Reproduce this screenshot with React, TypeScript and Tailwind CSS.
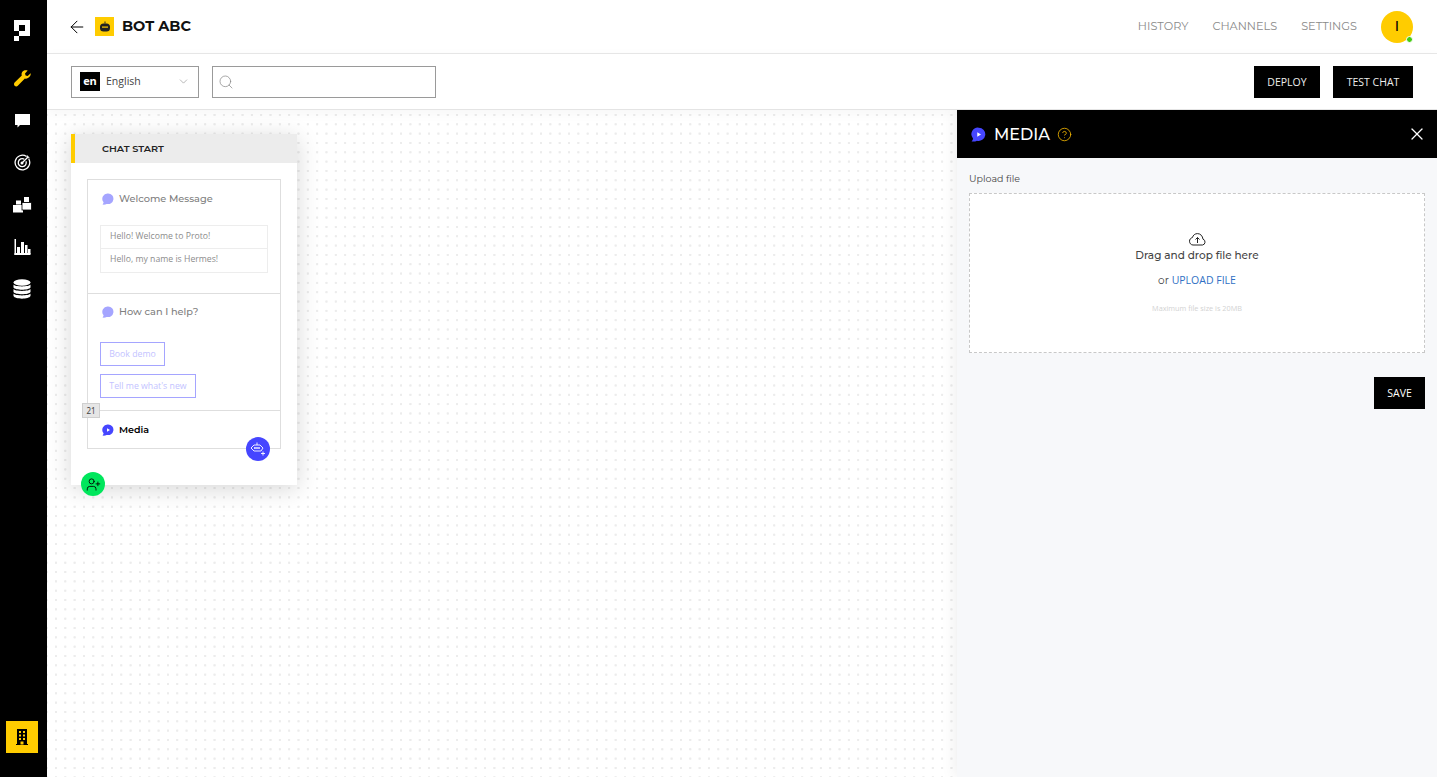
import { ArrowLeft, ChevronDown, HelpCircle, Search, UserPlus, X } from "lucide-react";

const mont = "font-['Montserrat','Inter','Liberation_Sans',sans-serif]";
const open = "font-['Open_Sans',sans-serif]";

function Logo() {
  return (
    <svg width="16" height="21" viewBox="0 0 16 21" fill="white">
      <path d="M0 0h16v16H5v-5H0z" />
      <rect x="5" y="5" width="6" height="6" fill="black" />
      <rect x="0" y="16" width="5" height="5" />
    </svg>
  );
}

function Wrench() {
  return (
    <svg width="17" height="17" viewBox="0 0 17 17" fill="#ffcc00">
      <path d="M16.6 3.2l-2.9 2.7-2.1-.5-.6-2L13.700.6C11.600-.3 9.300.2 8.200 2c-.7 1.100-.8 2.300-.4 3.400L.6 12.600c-.8.8-.8 2.200 0 3.200 1 .9 2.400.9 3.200 0l7.100-7.300c1.300.4 2.700.1 3.800-.9 1.400-1.200 2.300-3 1.900-4.400z" />
    </svg>
  );
}

function ChatIcon() {
  return (
    <svg width="15" height="14" viewBox="0 0 15 14" fill="white">
      <path d="M0 0h15v11H5l-2.500 2.500V11H0z" />
    </svg>
  );
}

function TargetIcon() {
  return (
    <svg width="17" height="17" viewBox="0 0 17 17" fill="none" stroke="white">
      <path d="M12.500 2.500A7.300 7.300 0 1 0 14.800 5" strokeWidth="1.300" />
      <path d="M10.300 5.200A4 4 0 1 0 12 7.200" strokeWidth="1.300" />
      <circle cx="8" cy="9" r="1.500" fill="white" stroke="none" />
      <path d="M8 9l6.500-6.500" strokeWidth="1.200" />
      <path d="M13 1.500l.5 2 2 .5" strokeWidth="1.200" />
    </svg>
  );
}

function BlocksIcon() {
  return (
    <svg width="19" height="16" viewBox="0 0 19 16" fill="white">
      <rect x="3" y="3.500" width="5" height="4" />
      <rect x="11" y="0" width="5" height="5" />
      <rect x="0" y="8" width="10" height="7.500" />
      <rect x="9" y="5.500" width="9.500" height="7.500" stroke="black" strokeWidth="0.800" />
    </svg>
  );
}

function BarsIcon() {
  return (
    <svg width="17" height="16" viewBox="0 0 17 16" fill="white">
      <rect x="0.500" y="0" width="1.500" height="16" />
      <rect x="0.500" y="14" width="16" height="2" />
      <rect x="3" y="8" width="3" height="7" />
      <rect x="7" y="3" width="3" height="12" />
      <rect x="11" y="6" width="2.500" height="9" />
      <rect x="14" y="10" width="2.500" height="5" />
    </svg>
  );
}

function DbIcon() {
  return (
    <svg width="18" height="20" viewBox="0 0 18 20" fill="white">
      <ellipse cx="9" cy="3.500" rx="8.500" ry="3.200" />
      <path d="M.500 5.500C2 8 16 8 17.500 5.500v3C16 11.500 2 11.500.500 8.500z" />
      <path d="M.500 10C2 12.500 16 12.500 17.500 10v3C16 16 2 16 .500 13z" />
      <path d="M.500 14.500C2 17 16 17 17.500 14.500v2.500C16 20.500 2 20.500.500 17z" />
    </svg>
  );
}

function Building() {
  return (
    <svg width="12" height="16" viewBox="0 0 12 16" fill="black">
      <path d="M1 0h10v15h1v1H0v-1h1z" />
      <g fill="#ffcc00">
        <rect x="3" y="2" width="2" height="2" />
        <rect x="7" y="2" width="2" height="2" />
        <rect x="3" y="5.500" width="2" height="2" />
        <rect x="7" y="5.500" width="2" height="2" />
        <rect x="3" y="9" width="2" height="2" />
        <rect x="7" y="9" width="2" height="2" />
        <rect x="4.500" y="12.500" width="3" height="3" />
      </g>
    </svg>
  );
}

function Bubble({ color, play, size = 12 }: { color: string; play?: boolean; size?: number }) {
  return (
    <svg width={size} height={size} viewBox="0 0 12 12">
      <path d="M6.200 0.500a5.300 5.300 0 1 1-1.500 10.400C3.500 11.600 1.500 11.800.500 11.500c.5-.5 1-1.300 1.100-2.300A5.300 5.300 0 0 1 6.200.500z" fill={color} />
      {play && <path d="M5 4.200l3 1.800-3 1.800z" fill="white" />}
    </svg>
  );
}

function BotGlyph() {
  return (
    <svg width="12" height="12" viewBox="0 0 12 12" fill="#222">
      <rect x="5.500" y="0.500" width="1" height="2" />
      <rect x="1" y="2.500" width="10" height="8" rx="3.500" />
      <rect x="3" y="5.500" width="6" height="1.200" fill="#ffcc00" />
    </svg>
  );
}

function RobotPlus() {
  return (
    <svg width="16" height="14" viewBox="0 0 16 14" fill="none" stroke="white" strokeWidth="0.900">
      <path d="M7 .5v2.500" />
      <path d="M4 3h6l3 3-2 3H4L1 6z" />
      <path d="M4 6h6" strokeWidth="1.300" />
      <path d="M13 9.500v4M11 11.500h4" />
    </svg>
  );
}

function CloudArrow() {
  return (
    <svg width="17" height="13" viewBox="0 0 17 13" fill="none" stroke="#222" strokeWidth="1">
      <path d="M4 12h9.500a3 3 0 0 0 .5-5.800C13.600 3 11.500.6 8.500.6 6 .6 4 2.200 3.400 4.600 1.600 5 .5 6.500.5 8.200.5 10.300 2 12 4 12z" />
      <path d="M8.500 10V4.500M6.500 6.500l2-2 2 2" />
    </svg>
  );
}

const sidebarIcons = [
  <Wrench key="wrench" />,
  <ChatIcon key="chat" />,
  <TargetIcon key="target" />,
  <BlocksIcon key="blocks" />,
  <BarsIcon key="bars" />,
  <DbIcon key="db" />,
];

function Sidebar() {
  return (
    <aside className="flex h-[777px] w-[47px] shrink-0 flex-col items-center justify-between bg-black pt-[20px] pr-[3px] pb-[24px]">
      <div className="flex flex-col items-center">
        <div className="mb-[27px] flex h-[21px] items-center">
          <Logo />
        </div>
        <div className="flex flex-col items-center gap-[21px]">
          {sidebarIcons.map((icon, i) => (
            <div key={i} className="flex h-[21px] w-[22px] items-center justify-center">
              {icon}
            </div>
          ))}
        </div>
      </div>
      <div className="flex h-[32px] w-[32px] items-center justify-center bg-[#ffcc00]">
        <Building />
      </div>
    </aside>
  );
}

function TopBar() {
  return (
    <header className="flex h-[54px] items-center border-b border-[#e8e8e8] bg-white pr-[24px] pl-[20px]">
      <ArrowLeft size={20} strokeWidth={1.2} className="text-black" />
      <div className="ml-[8px] flex h-[19px] w-[19px] items-center justify-center bg-[#ffcc00]">
        <BotGlyph />
      </div>
      <span className={`ml-[8px] text-[14.500px] font-bold text-[#111] ${mont}`}>BOT ABC</span>
      <nav className={`ml-auto flex items-center gap-[24px] text-[11.300px] text-[#8a8a8a] ${mont}`}>
        <span>HISTORY</span>
        <span>CHANNELS</span>
        <span>SETTINGS</span>
      </nav>
      <div className="relative ml-[24px] flex h-[32px] w-[32px] items-center justify-center rounded-full bg-[#ffcc00]">
        <span className={`text-[14px] font-medium text-black ${mont}`}>I</span>
        <span className="absolute right-0 bottom-0 h-[7px] w-[7px] rounded-full border border-white bg-[#44cc11]" />
      </div>
    </header>
  );
}

function Toolbar() {
  return (
    <div className="relative z-10 flex h-[56px] items-center border-b border-[#e4e4e4] bg-white pr-[24px] pl-[24px] shadow-[0_3px_12px_rgba(0,0,0,0.04)]">
      <div className="flex h-[32px] w-[128px] items-center border border-[#9a9a9a] pr-[9px] pl-[8px]">
        <span className={`flex h-[19px] w-[20px] items-center justify-center bg-black text-[11px] font-bold text-white ${open}`}>en</span>
        <span className={`ml-[6px] text-[10.500px] text-[#444] ${open}`}>English</span>
        <ChevronDown size={13} strokeWidth={1.1} className="ml-auto translate-x-[1px] text-[#888]" />
      </div>
      <div className="ml-[13px] flex h-[32px] w-[224px] items-center border border-[#9a9a9a] pl-[5px]">
        <Search size={16} strokeWidth={1.1} className="text-[#888]" />
      </div>
      <button className={`ml-auto h-[32px] w-[66px] bg-black pt-[2px] text-[10.500px] font-medium text-[#eee] ${open}`}>DEPLOY</button>
      <button className={`ml-[13px] h-[32px] w-[80px] bg-black pt-[2px] text-[10.500px] font-medium text-[#eee] ${open}`}>TEST CHAT</button>
    </div>
  );
}

function FlowCard() {
  return (
    <div className="relative w-[226px] bg-white pb-[36px] shadow-[0_4px_22px_rgba(0,0,0,0.16)]">
      <div className={`flex h-[29px] items-center border-l-4 border-[#ffcc00] bg-[#ececec] pt-px pl-[27px] text-[9.700px] font-semibold text-[#222] ${mont}`}>
        CHAT START
      </div>
      <div className="relative mx-[16px] mt-[16px] border border-[#dedede]">
        <section className="h-[114px] border-b border-[#dedede] pt-[12px] pr-[12px] pl-[12px]">
          <div className="flex items-center pl-[2px]">
            <Bubble color="#a5a5ff" />
            <span className={`ml-[5px] text-[9.800px] font-medium text-[#808080] ${mont}`}>Welcome Message</span>
          </div>
          <div className={`mt-[18px] border border-[#ededed] text-[8.700px] text-[#8c8c8c] ${open}`}>
            <div className="flex h-[23px] items-center border-b border-[#ededed] pb-px pl-[9px]">Hello! Welcome to Proto!</div>
            <div className="flex h-[23px] items-center pb-px pl-[9px]">Hello, my name is Hermes!</div>
          </div>
        </section>
        <section className="h-[117px] border-b border-[#dedede] pt-[11px] pl-[12px]">
          <div className="flex items-center pl-[2px]">
            <Bubble color="#a5a5ff" />
            <span className={`ml-[5px] text-[9.800px] font-medium text-[#808080] ${mont}`}>How can I help?</span>
          </div>
          <div className={`mt-[22px] flex h-[24px] w-[65px] items-center justify-center border border-[#a5a5ff] pt-[2px] text-[8.750px] text-[#c3c3ff] ${open}`}>
            Book demo
          </div>
          <div className={`mt-[8px] flex h-[24px] w-[96px] items-center justify-center border border-[#a5a5ff] pt-[2px] text-[8.750px] text-[#c3c3ff] ${open}`}>
            Tell me what's new
          </div>
        </section>
        <section className="flex h-[37px] items-center pt-px pl-[14px]">
          <Bubble color="#4646ff" play />
          <span className={`ml-[5px] text-[9.500px] font-semibold text-black ${mont}`}>Media</span>
        </section>
        <span className="absolute top-[223px] left-[-6px] flex h-[15px] w-[18px] items-center justify-center border border-[#cfcfcf] bg-[#e6e6e6] text-[8px] text-[#444]">21</span>
        <span className="absolute right-[10px] bottom-[-13px] flex h-[24px] w-[24px] items-center justify-center rounded-full bg-[#4646ff]">
          <RobotPlus />
        </span>
      </div>
      <span className="absolute bottom-[-11px] left-[10px] flex h-[24px] w-[24px] items-center justify-center rounded-full bg-[#00e65c]">
        <UserPlus size={15} strokeWidth={1.4} className="text-black" />
      </span>
    </div>
  );
}

function MediaPanel() {
  return (
    <aside className="flex w-[480px] shrink-0 flex-col bg-[#f7f8fa] shadow-[0_0_16px_rgba(0,0,0,0.09)]">
      <div className="flex h-[48px] items-center bg-black pr-[10px] pl-[14px]">
        <Bubble color="#4646ff" play size={15} />
        <span className={`ml-[8px] pt-px text-[16px] font-medium text-white ${mont}`}>MEDIA</span>
        <HelpCircle size={15} strokeWidth={1.3} className="ml-[7px] text-[#f5b800]" />
        <X size={20} strokeWidth={1.5} className="ml-auto text-white" />
      </div>
      <div className="flex flex-col px-[12px] pt-[14px]">
        <label className={`text-[9.500px] text-[#444] ${mont}`}>Upload file</label>
        <div className="mt-[7px] flex h-[160px] flex-col items-center border border-dashed border-[#c8c8c8] bg-white pt-[39px]">
          <CloudArrow />
          <span className={`mt-[2px] text-[10.500px] font-medium text-[#444] ${mont}`}>Drag and drop file here</span>
          <span className={`mt-[9px] text-[10.500px] text-[#444] ${mont}`}>
            or <span className={`text-[#2f6fc4] ${open}`}>UPLOAD FILE</span>
          </span>
          <span className={`mt-[14px] text-[7.300px] text-[#d2d2d2] ${open}`}>Maximum file size is 20MB</span>
        </div>
        <button className={`mt-[24px] h-[32px] w-[51px] self-end bg-black pt-[2px] text-[10.500px] font-medium text-white ${open}`}>SAVE</button>
      </div>
    </aside>
  );
}

export default function App() {
  return (
    <div className="flex h-[777px] w-full overflow-hidden bg-white">
      <Sidebar />
      <main className="flex min-w-0 flex-1 flex-col">
        <TopBar />
        <Toolbar />
        <div className="flex min-h-0 flex-1">
          <div className="flex-1 bg-white bg-[radial-gradient(1.700px_0.700px_at_center,#ececec_99%,transparent_100%),radial-gradient(0.700px_1.700px_at_center,#ececec_99%,transparent_100%)] bg-[length:9.330px_9.330px] bg-[position:4.300px_0.300px] px-[24px] pt-[24px]">
            <FlowCard />
          </div>
          <MediaPanel />
        </div>
      </main>
    </div>
  );
}
